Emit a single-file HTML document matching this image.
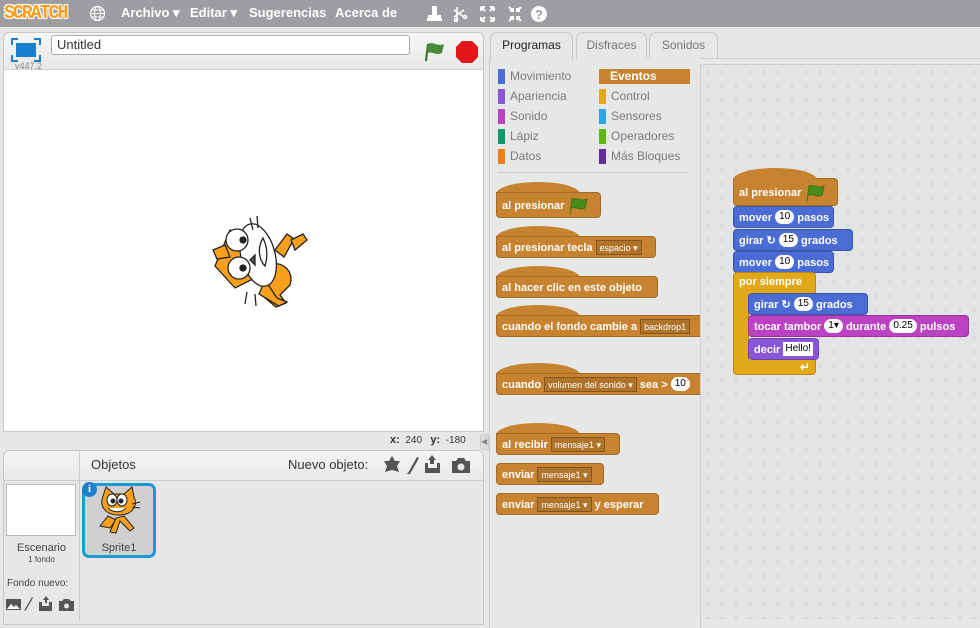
<!DOCTYPE html>
<html><head><meta charset="utf-8"><style>
*{box-sizing:border-box;margin:0;padding:0}
body{width:980px;height:619px;overflow:hidden;background:#e6e8e8;font-family:"Liberation Sans",sans-serif;position:relative}
.a{position:absolute}
#top{left:0;top:0;width:980px;height:27px;background:#9c9ea2}
.menu{color:#fff;font-weight:bold;font-size:13px;top:5px}
.logo{left:4px;top:2px;font:bold 19px "Liberation Mono",monospace;color:#f8a01c;letter-spacing:-2px;transform:scaleX(0.95);transform-origin:left;text-shadow:0 0 2px #fff,0 0 2px #fff,1px 1px 0 #fff,-1px -1px 0 #fff,1px -1px 0 #fff,-1px 1px 0 #fff}
.b{position:absolute;height:22px;border-radius:4px;color:#fff;font-weight:bold;font-size:11px;line-height:22px;padding-left:5px;white-space:nowrap;word-spacing:0}
.hat{border-radius:0 4px 4px 4px}
.hat::before{content:"";position:absolute;left:-1px;top:-11px;width:84px;height:24px;border-radius:42px/12px;background:inherit;z-index:-1}
.ev{background:#c88330;border:1px solid #a56a26}
.mo{background:#4a6cd4;border:1px solid #3a55a8}
.co{background:#e1a91a;border:1px solid #b78812}
.so{background:#bb42c3;border:1px solid #963499}
.lo{background:#8a55d7;border:1px solid #6e44ac}
.dd{display:inline-block;height:15px;line-height:14px;font-size:9px;font-weight:normal;padding:0 3px;background:rgba(0,0,0,.12);border:1px solid rgba(0,0,0,.25);vertical-align:middle;margin-top:-2px}
.num{display:inline-block;height:14px;line-height:14px;font-size:10px;font-weight:normal;padding:0 4px;background:#fff;color:#000;border-radius:7px;vertical-align:middle;margin-top:-2px}
.str{display:inline-block;height:14px;line-height:14px;font-size:10px;font-weight:normal;padding:0 2px;background:#fff;color:#000;vertical-align:middle;margin-top:-2px}
.cat{font-size:12px;color:#7b7b7b;height:15px;line-height:15px}
.cat i{display:inline-block;width:7px;height:15px;vertical-align:top;margin-right:5px}
.tab{top:32px;height:27px;border:1px solid #c8c8c8;border-bottom:none;border-radius:7px 7px 0 0;background:#e6e8e8;font-size:12px;color:#777;text-align:center;line-height:25px}
</style></head><body>
<div id="top" class="a"></div>
<div class="a logo">SCRATCH</div>
<svg class="a" style="left:89px;top:5px" width="17" height="17" viewBox="0 0 17 17"><circle cx="8.5" cy="8.5" r="7" fill="none" stroke="#fff" stroke-width="1.2"/><ellipse cx="8.5" cy="8.5" rx="3" ry="7" fill="none" stroke="#fff" stroke-width="1"/><path d="M1.5 8.5h14M3 5h11M3 12h11" stroke="#fff" stroke-width="1"/></svg>
<div class="a menu" style="left:121px">Archivo ▾</div>
<div class="a menu" style="left:190px">Editar ▾</div>
<div class="a menu" style="left:249px">Sugerencias</div>
<div class="a menu" style="left:335px">Acerca de</div>
<svg class="a" style="left:424px;top:4px" width="130" height="20" viewBox="0 0 130 20">
<g fill="#fff"><rect x="8" y="2" width="5" height="9"/><rect x="4" y="11" width="13" height="3"/><rect x="3" y="14" width="15" height="3"/></g>
<g stroke="#fff" stroke-width="1.6" fill="none"><path d="M33 3v14M30 6l10 7M30 13l10-7"/><circle cx="32" cy="16" r="1.5"/><circle cx="41" cy="13" r="1.5"/></g>
<g stroke="#fff" stroke-width="2" fill="none"><path d="M57 3h4M57 3v4M70 3h-4M70 3v4M57 17h4M57 17v-4M70 17h-4M70 17v-4M58 4l3 3M69 4l-3 3M58 16l3-3M69 16l-3-3"/>
<path d="M86 7h3v-3M96 7h-3v-3M86 13h3v3M96 13h-3v3M85 3l4 4M97 3l-4 4M85 17l4-4M97 17l-4-4"/></g>
<circle cx="115" cy="10" r="8" fill="#fff"/><text x="115" y="15" font-size="13" font-weight="bold" text-anchor="middle" fill="#9c9ea2" font-family="Liberation Sans">?</text></svg>

<!-- stage -->
<div class="a" style="left:3px;top:32px;width:481px;height:400px;background:#fff;border:1px solid #c8c8c8;border-radius:6px 6px 0 0"></div>
<div class="a" style="left:3px;top:32px;width:481px;height:38px;background:linear-gradient(#f6f6f6,#e8e8e8);border:1px solid #c8c8c8;border-bottom:1px solid #d0d0d0;border-radius:6px 6px 0 0"></div>
<svg class="a" style="left:11px;top:38px" width="30" height="24"><path d="M1 7V1h6M23 1h6v6M1 17v6h6M23 23h6v-6" stroke="#1b7fd0" stroke-width="2" fill="none"/><rect x="5" y="5" width="20" height="14" fill="#1b7fd0"/></svg>
<div class="a" style="left:15px;top:61px;font-size:9px;color:#888">v447.2</div>
<div class="a" style="left:51px;top:35px;width:359px;height:20px;background:#fff;border:1px solid #aaa;border-radius:3px;font-size:13px;padding-left:5px;line-height:18px;color:#333">Untitled</div>
<svg class="a" style="left:423px;top:40px" width="24" height="22"><path d="M3 21L5 4" stroke="#2c6b23" stroke-width="2"/><path d="M5 4c5-3 9 3 16 0l-2 9c-6 3-10-2-15 0z" fill="#4a8c3c"/></svg>
<svg class="a" style="left:455px;top:40px" width="24" height="24"><polygon points="7,1 17,1 23,7 23,17 17,23 7,23 1,17 1,7" fill="#e3161a"/></svg>
<!-- stage cat -->
<svg class="a" style="left:205px;top:210px" width="115" height="100" viewBox="0 0 115 100">
<g stroke="#222" stroke-width="1.3">
<path d="M70 40l12-16 7 5-10 18z" fill="#f8a01c"/><path d="M86 30l12-6 4 6-12 10z" fill="#f8a01c"/>
<path d="M65 55c10-5 25 5 20 20l-10 10 6 8-10 4-12-10z" fill="#f8a01c"/>
<path d="M60 70l12 18 10 4-8 4-20-12z" fill="#f8a01c"/>
<path d="M25 20l15 8 10 40-20 10-20-22z" fill="#f8a01c"/>
<path d="M8 40l12-5 5 12-13 2z" fill="#f8a01c"/>
<ellipse cx="53" cy="45" rx="17" ry="32" fill="#fff" transform="rotate(-15 53 45)"/>
<circle cx="32" cy="30" r="11" fill="#fff"/><circle cx="34" cy="58" r="11" fill="#fff"/>
<circle cx="38" cy="30" r="3" fill="#222"/><circle cx="38" cy="58" r="3" fill="#222"/>
<path d="M50 45l-5 5 5 5z" fill="#555"/><path d="M58 28c-6 10-4 22 2 28 3-10 2-20-2-28z" fill="#fff"/>
<path d="M45 8l3 12M52 6l1 12M42 82l-2 12M50 84l1 12" fill="none"/></g></svg>

<div class="a" style="left:390px;top:434px;font-size:10px;color:#333"><b style="font-size:11px">x:</b>&nbsp; 240 &nbsp; <b style="font-size:11px">y:</b>&nbsp; -180</div>
<div class="a" style="left:480px;top:434px;width:9px;height:16px;background:#ddd;border:1px solid #ccc;border-radius:3px 0 0 3px;font-size:8px;color:#888;line-height:14px">◀</div>

<!-- sprite pane -->
<div class="a" style="left:3px;top:450px;width:481px;height:175px;background:#e6e8e8;border:1px solid #c8c8c8;border-radius:6px 6px 0 0"></div>
<div class="a" style="left:4px;top:451px;width:479px;height:30px;background:linear-gradient(#f4f4f4,#e9e9e9);border-bottom:1px solid #ccc;border-radius:6px 6px 0 0"></div>
<div class="a" style="left:79px;top:451px;width:1px;height:170px;background:#ccc"></div>
<div class="a" style="left:91px;top:457px;font-size:13px;color:#333">Objetos</div>
<div class="a" style="left:288px;top:457px;font-size:13px;color:#333">Nuevo objeto:</div>
<svg class="a" style="left:382px;top:454px" width="95" height="22" viewBox="0 0 95 22"><g fill="#555"><path d="M10 2l3 5h5l-3 5 2 6-7-2-7 2 2-6-3-5h5z"/><path d="M24 20l2-1 9-16 2 1-9 16z"/><path d="M48 10v-4l-2 0 4-5 4 5h-2v4zM43 9h3v5h9v-5h3v10h-15z"/><path d="M70 7h4l2-3h6l2 3h4v12h-18z"/></g><circle cx="79" cy="13" r="3.5" fill="#e6e8e8"/></svg>
<div class="a" style="left:6px;top:484px;width:70px;height:52px;background:#fff;border:1px solid #bbb"></div>
<div class="a" style="left:4px;top:542px;width:75px;text-align:center;font-size:11px;color:#444">Escenario</div>
<div class="a" style="left:4px;top:555px;width:75px;text-align:center;font-size:8px;color:#444">1 fondo</div>
<div class="a" style="left:7px;top:578px;font-size:10px;color:#444">Fondo nuevo:</div>
<svg class="a" style="left:5px;top:596px" width="72" height="16" viewBox="0 0 72 16"><g fill="#555"><rect x="1" y="3" width="15" height="11"/><path d="M19 15l1-2 7-12 1 1-7 12z"/><path d="M40 7v-3h-2l3-4 3 4h-2v3zM34 6h3v4h7v-4h3v9h-13z"/><path d="M54 5h3l2-2h5l2 2h3v10h-15z"/></g><path d="M2 13l4-5 3 3 2-2 4 4z" fill="#fff"/><circle cx="61.5" cy="10" r="2.5" fill="#e6e8e8"/></svg>
<div class="a" style="left:82px;top:483px;width:74px;height:75px;background:#d0d0d0;border:3px solid #1b9ad7;border-radius:7px"></div>
<div class="a" style="left:82px;top:482px;width:15px;height:15px;background:#1b7fd0;border-radius:50%;color:#fff;font:bold 11px 'Liberation Serif',serif;text-align:center;line-height:15px">i</div>
<svg class="a" style="left:94px;top:486px" width="50" height="50" viewBox="0 0 50 50"><g stroke="#222" stroke-width="1"><path d="M14 30l-8 10 10 2 6-8z" fill="#f8a01c"/><path d="M22 32l-6 14 6 1 4-12 10 10 4-3-10-12z" fill="#f8a01c"/><path d="M9 10l3-9 8 7h10l8-7 2 10c4 8-1 18-15 18S5 20 9 10z" fill="#f8a01c"/><ellipse cx="18" cy="14" rx="5" ry="6" fill="#fff"/><ellipse cx="28" cy="14" rx="5" ry="6" fill="#fff"/><circle cx="19" cy="15" r="2" fill="#222"/><circle cx="27" cy="15" r="2" fill="#222"/><path d="M14 22c5 5 14 5 18 0" fill="#fff"/><path d="M38 18l8-2M38 21l8 1" fill="none"/></g></svg>
<div class="a" style="left:82px;top:542px;width:74px;text-align:center;font-size:11px;color:#444">Sprite1</div>

<!-- tabs -->
<div class="a" style="left:489px;top:58px;width:212px;height:570px;background:#e6e8e8;border-left:1px solid #ccc;border-right:1px solid #ccc"></div>
<div class="a tab" style="left:576px;width:71px">Disfraces</div>
<div class="a tab" style="left:649px;width:69px">Sonidos</div>
<div class="a tab" style="left:490px;width:83px;color:#222;height:28px;background:#e6e8e8;z-index:2">Programas</div>
<div class="a" style="left:700px;top:58px;width:280px;height:6px;background:#e6e8e8;border-top:1px solid #ccc"></div>
<div class="a" style="left:700px;top:64px;width:280px;height:555px;background-color:#e3e4e5;border-left:1px solid #ccc;border-top:1px solid #ccc;border-radius:5px 0 0 0;background-image:radial-gradient(circle,#d0d2d3 1px,transparent 1.5px);background-size:14px 14px"></div>

<!-- categories -->
<div class="a cat" style="left:498px;top:69px"><i style="background:#4a6cd4"></i>Movimiento</div>
<div class="a cat" style="left:498px;top:89px"><i style="background:#8a55d7"></i>Apariencia</div>
<div class="a cat" style="left:498px;top:109px"><i style="background:#bb42c3"></i>Sonido</div>
<div class="a cat" style="left:498px;top:129px"><i style="background:#0e9a6c"></i>Lápiz</div>
<div class="a cat" style="left:498px;top:149px"><i style="background:#ee7d16"></i>Datos</div>
<div class="a cat" style="left:599px;top:69px;width:91px;background:#c88330;color:#fff;font-weight:bold;padding-left:11px">Eventos</div>
<div class="a cat" style="left:599px;top:89px"><i style="background:#e1a91a"></i>Control</div>
<div class="a cat" style="left:599px;top:109px"><i style="background:#2ca5e2"></i>Sensores</div>
<div class="a cat" style="left:599px;top:129px"><i style="background:#5cb712"></i>Operadores</div>
<div class="a cat" style="left:599px;top:149px"><i style="background:#632d99"></i>Más Bloques</div>
<div class="a" style="left:498px;top:172px;width:190px;height:1px;background:#c8c8c8"></div>

<!-- palette blocks -->
<div style="position:absolute;left:0;top:0;width:700px;height:619px;overflow:hidden;z-index:1">
<div class="b ev hat" style="left:496px;top:192px;width:105px;height:26px;line-height:26px">al presionar <svg width="22" height="18" style="vertical-align:middle"><path d="M3 17L5 2c5-2 9 3 15 0l-2 9c-5 3-9-2-13 0" fill="#4a8c1c" stroke="#3a7312"/></svg></div>
<div class="b ev hat" style="left:496px;top:236px;width:160px">al presionar tecla <span class="dd">espacio ▾</span></div>
<div class="b ev hat" style="left:496px;top:276px;width:162px">al hacer clic en este objeto</div>
<div class="b ev hat" style="left:496px;top:315px;width:210px">cuando el fondo cambie a <span class="dd">backdrop1</span></div>
<div class="b ev hat" style="left:496px;top:373px;width:220px">cuando <span class="dd">volumen del sonido ▾</span> sea &gt; <span class="num">10</span></div>
<div class="b ev hat" style="left:496px;top:433px;width:124px">al recibir <span class="dd">mensaje1 ▾</span></div>
<div class="b ev" style="left:496px;top:463px;width:108px">enviar <span class="dd">mensaje1 ▾</span></div>
<div class="b ev" style="left:496px;top:493px;width:163px">enviar <span class="dd">mensaje1 ▾</span> y esperar</div>
</div>

<!-- script -->
<div class="b ev hat" style="left:733px;top:178px;width:105px;height:28px;line-height:28px;z-index:1">al presionar <svg width="22" height="18" style="vertical-align:middle"><path d="M3 17L5 2c5-2 9 3 15 0l-2 9c-5 3-9-2-13 0" fill="#4a8c1c" stroke="#3a7312"/></svg></div>
<div class="b mo" style="left:733px;top:206px;width:101px">mover <span class="num">10</span> pasos</div>
<div class="b mo" style="left:733px;top:229px;width:120px">girar ↻ <span class="num">15</span> grados</div>
<div class="b mo" style="left:733px;top:251px;width:101px">mover <span class="num">10</span> pasos</div>
<div class="a" style="left:733px;top:272px;width:83px;height:103px;background:#e1a91a;border:1px solid #b78812;border-radius:4px"></div>
<div class="a" style="left:748px;top:293px;width:68px;height:67px;background:#e3e4e5;border-left:1px solid #b78812"></div>
<div class="a" style="left:739px;top:276px;color:#fff;font-weight:bold;font-size:11px">por siempre</div>
<div class="a" style="left:800px;top:360px;color:#fff;font-size:12px;font-weight:bold">↵</div>
<div class="b mo" style="left:748px;top:293px;width:120px">girar ↻ <span class="num">15</span> grados</div>
<div class="b so" style="left:748px;top:315px;width:221px">tocar tambor <span class="num">1▾</span> durante <span class="num">0.25</span> pulsos</div>
<div class="b lo" style="left:748px;top:338px;width:71px">decir <span class="str">Hello!</span></div>
</body></html>
